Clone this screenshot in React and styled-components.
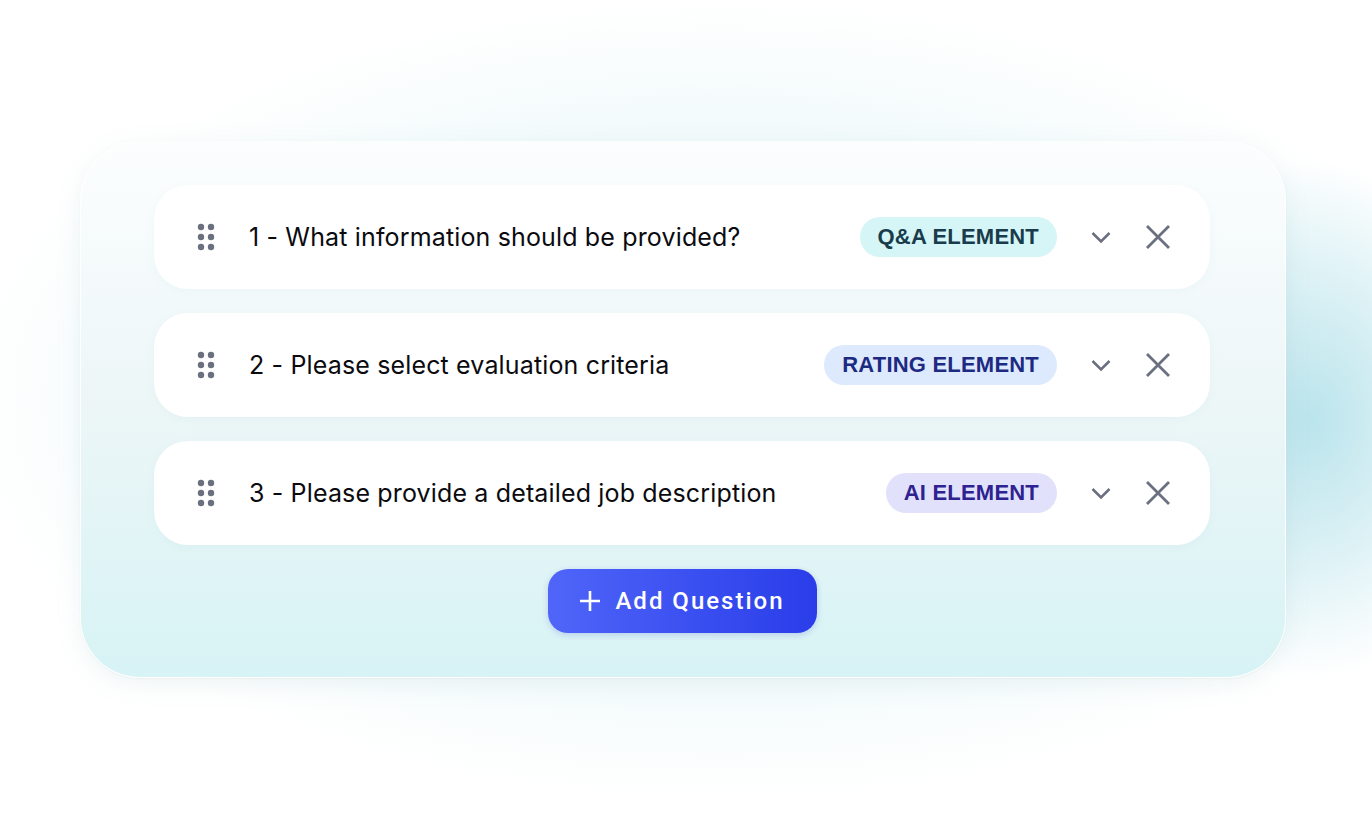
import React from "react";
import styled, { createGlobalStyle } from "styled-components";

const GlobalStyle = createGlobalStyle`
  html, body {
    margin: 0;
    padding: 0;
    background: #ffffff;
  }
`;

const Page = styled.div`
  width: 1372px;
  height: 820px;
  display: flex;
  align-items: flex-start;
  padding: 141px 0 0 80px;
  box-sizing: border-box;
  background:
    radial-gradient(ellipse 200px 260px at 1310px 420px, rgba(176, 224, 233, 0.85), rgba(176, 224, 233, 0) 100%),
    radial-gradient(ellipse 760px 400px at 720px 400px, rgba(206, 237, 241, 0.8), rgba(206, 237, 241, 0) 100%),
    #ffffff;
  overflow: hidden;
`;

const Panel = styled.div`
  width: 1206px;
  box-sizing: border-box;
  padding: 43px 75px 44px 73px;
  border-radius: 60px;
  background: linear-gradient(180deg, #fcfefe 0%, #ecf6f7 50%, #d7f3f5 100%);
  border: 1px solid rgba(255, 255, 255, 0.9);
  box-shadow: 0 6px 24px rgba(120, 170, 180, 0.12), 0 1px 2px rgba(0, 0, 0, 0.04);
  display: flex;
  flex-direction: column;
  align-items: center;
  gap: 24px;
`;

const List = styled.div`
  width: 100%;
  display: flex;
  flex-direction: column;
  gap: 24px;
`;

const Row = styled.div`
  height: 104px;
  background: #ffffff;
  border-radius: 34px;
  display: flex;
  align-items: center;
  padding: 0 39px 0 43px;
  box-shadow: 0 2px 10px rgba(120, 170, 180, 0.06);
`;

const Handle = styled.svg`
  flex: none;
  width: 18px;
  height: 28px;
  margin-right: 34px;
`;

const Title = styled.div`
  flex: 1;
  font-family: Inter, "Noto Sans", sans-serif;
  font-size: 25px;
  font-weight: 400;
  letter-spacing: 0.15px;
  color: #0b0b0f;
`;

const Badge = styled.span`
  flex: none;
  height: 40px;
  display: inline-flex;
  align-items: center;
  padding: 0 18px;
  border-radius: 20px;
  font-family: "Liberation Sans", Arial, sans-serif;
  font-weight: 700;
  font-size: 22px;
  letter-spacing: 0.2px;
  background: ${(p) => p.$bg};
  color: ${(p) => p.$fg};
`;

const IconButton = styled.button`
  flex: none;
  border: none;
  background: none;
  padding: 0;
  display: flex;
  align-items: center;
  justify-content: center;
  margin-left: ${(p) => p.$gap}px;
  cursor: pointer;
`;

const AddButton = styled.button`
  width: 269px;
  height: 64px;
  border: none;
  border-radius: 20px;
  background: linear-gradient(90deg, #5065f8 0%, #3a4ff0 55%, #2a3de9 100%);
  box-shadow: 0 2px 6px rgba(40, 60, 200, 0.2);
  color: #ffffff;
  display: flex;
  align-items: center;
  justify-content: center;
  gap: 14px;
  font-family: Roboto, "Noto Sans", sans-serif;
  font-weight: 500;
  font-size: 24px;
  letter-spacing: 2px;
  cursor: pointer;
`;

const questions = [
  {
    n: 1,
    text: "What information should be provided?",
    label: "Q&A ELEMENT",
    bg: "#d6f5f7",
    fg: "#183c4c",
  },
  {
    n: 2,
    text: "Please select evaluation criteria",
    label: "RATING ELEMENT",
    bg: "#dde9fd",
    fg: "#1d2a82",
  },
  {
    n: 3,
    text: "Please provide a detailed job description",
    label: "AI ELEMENT",
    bg: "#e1e1fb",
    fg: "#2d2290",
  },
];

function DragHandle() {
  const dots = [];
  [0, 1, 2].forEach((r) =>
    [0, 1].forEach((c) =>
      dots.push(<circle key={`${r}-${c}`} cx={4 + c * 10} cy={4 + r * 10} r={3.2} fill="#6b7080" />)
    )
  );
  return (
    <Handle viewBox="0 0 18 28" width="18" height="28">
      {dots}
    </Handle>
  );
}

function Chevron() {
  return (
    <svg width="24" height="24" viewBox="0 0 24 24" fill="none">
      <path d="M3.5 8l8.5 8.5 8.5-8.5" stroke="#6b7080" strokeWidth="2.6" />
    </svg>
  );
}

function Close() {
  return (
    <svg width="26" height="26" viewBox="0 0 26 26" fill="none">
      <path d="M2 2l22 22M24 2L2 24" stroke="#6b7080" strokeWidth="2.8" />
    </svg>
  );
}

function App() {
  return (
    <>
      <GlobalStyle />
      <Page>
        <Panel>
          <List>
            {questions.map((q) => (
              <Row key={q.n}>
                <DragHandle />
                <Title>
                  {q.n} - {q.text}
                </Title>
                <Badge $bg={q.bg} $fg={q.fg}>
                  {q.label}
                </Badge>
                <IconButton $gap={32} aria-label="Expand">
                  <Chevron />
                </IconButton>
                <IconButton $gap={32} aria-label="Remove">
                  <Close />
                </IconButton>
              </Row>
            ))}
          </List>
          <AddButton>
            <svg width="22" height="22" viewBox="0 0 22 22" fill="none">
              <path d="M11 1v20M1 11h20" stroke="#ffffff" strokeWidth="2.6" />
            </svg>
            Add Question
          </AddButton>
        </Panel>
      </Page>
    </>
  );
}

export default App;
